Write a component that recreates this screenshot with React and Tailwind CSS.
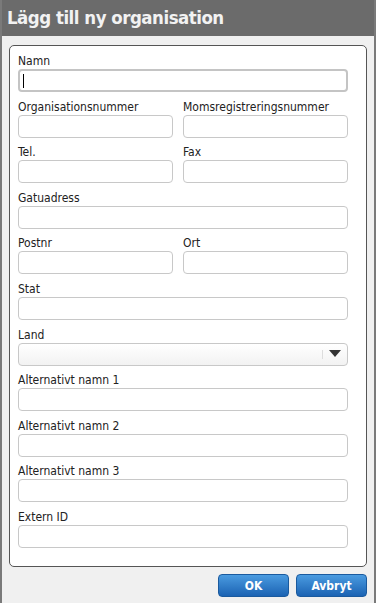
import React from "react";

const F = { fontFamily: '"DejaVu Sans Condensed", "DejaVu Sans", sans-serif' };

function Field({ label, focused, select }) {
  return (
    <div className="flex flex-col">
      <div className="h-[16px] text-[12px] leading-[17px] text-[#222]">{label}</div>
      <div
        className={
          "relative h-[23px] rounded-[4px] " +
          (focused
            ? "border-2 border-[#c4c4c4] bg-white"
            : select
            ? "border border-[#c8c8c8] bg-gradient-to-b from-white to-[#f2f2f2]"
            : "border border-[#c8c8c8] bg-white")
        }
      >
        {focused && <div className="absolute left-[3px] top-[3px] h-[14px] w-px bg-black" />}
        {select && (
          <div className="absolute right-[6px] top-[6px] flex items-center gap-[6px]">
            <div className="h-[9px] w-px bg-[#ddd]" />
            <svg width="12" height="8" viewBox="0 0 12 8">
              <path d="M0 0 L12 0 L6 7 Z" fill="#333" />
            </svg>
          </div>
        )}
      </div>
    </div>
  );
}

export default function App() {
  return (
    <div style={F} className="w-[376px] h-[603px] bg-[#f0f0f0] border-x-[2px] border-[#7a7a7a] flex flex-col">
      <div className="h-[36px] bg-[#6b6b6b] flex items-center pl-[5px]">
        <span className="text-[18.5px] font-bold text-[#f2f2f2] leading-none tracking-[-0.5px]">
          Lägg till ny organisation
        </span>
      </div>
      <div className="mt-[9px] ml-[7px] mr-[7px] h-[522px] rounded-[5px] border border-[#555] bg-white pl-[8px] pr-[18px] pt-[7px] flex flex-col gap-[6.6px]">
        <Field label="Namn" focused />
        <div className="grid grid-cols-[155px_1fr] gap-[10px]">
          <Field label="Organisationsnummer" />
          <Field label="Momsregistreringsnummer" />
        </div>
        <div className="grid grid-cols-[155px_1fr] gap-[10px]">
          <Field label="Tel." />
          <Field label="Fax" />
        </div>
        <Field label="Gatuadress" />
        <div className="grid grid-cols-[155px_1fr] gap-[10px]">
          <Field label="Postnr" />
          <Field label="Ort" />
        </div>
        <Field label="Stat" />
        <Field label="Land" select />
        <Field label="Alternativt namn 1" />
        <Field label="Alternativt namn 2" />
        <Field label="Alternativt namn 3" />
        <Field label="Extern ID" />
      </div>
      <div className="flex justify-end gap-[7px] mt-[7px] pr-[7px]">
        <button className="w-[71px] h-[23px] rounded-[4px] bg-gradient-to-b from-[#4a9be0] to-[#1b63b3] border border-[#1a5a9e] text-white text-[12px] font-bold">
          OK
        </button>
        <button className="w-[71px] h-[23px] rounded-[4px] bg-gradient-to-b from-[#4a9be0] to-[#1b63b3] border border-[#1a5a9e] text-white text-[12px] font-bold">
          Avbryt
        </button>
      </div>
    </div>
  );
}
